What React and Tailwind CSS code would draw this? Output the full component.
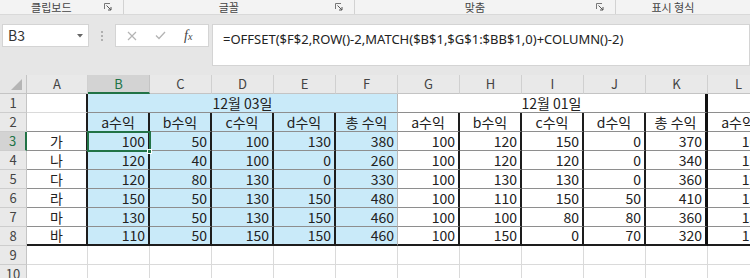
import React from "react";

const COLS = ["A", "B", "C", "D", "E", "F", "G", "H", "I", "J", "K", "L"];
const HEADS = ["a수익", "b수익", "c수익", "d수익", "총 수익"];
const ROWS = [
  ["가", 100, 50, 100, 130, 380, 100, 120, 150, 0, 370, 100],
  ["나", 120, 40, 100, 0, 260, 100, 120, 120, 0, 340, 120],
  ["다", 120, 80, 130, 0, 330, 100, 130, 130, 0, 360, 120],
  ["라", 150, 50, 130, 150, 480, 100, 110, 150, 50, 410, 150],
  ["마", 130, 50, 130, 150, 460, 100, 100, 80, 80, 360, 130],
  ["바", 110, 50, 150, 150, 460, 100, 150, 0, 70, 320, 110],
];

const font = "font-['Noto_Sans_CJK_KR','Noto_Sans',sans-serif]";

// right edge of a cell: black lines between the columns of each block
const rightBorder = (r, c) => {
  if (r > 8) return "border-r border-r-[#dadada]";
  if (c === 0) return "border-r-2 border-r-[#1d1d1d]";
  if (c === 5) return "border-r border-r-[#b8b8b8]";
  if (c === 10) return "border-r-[3px] border-r-[#111111]";
  if (r >= 2) return "border-r-2 border-r-[#1d1d1d]";
  return "border-r border-r-[#dadada]";
};

const bottomBorder = (r, c) => {
  if (r === 8) return "border-b-2 border-b-[#1d1d1d]";
  if (r < 8 && c >= 1) return "border-b border-b-[#8e8e8e]";
  if (c === 0 && r >= 2 && r < 8) return "border-b border-b-[#8e8e8e]";
  return "border-b border-b-[#dadada]";
};

const Cell = ({ r, c, blue, align = "right", span, children }) => (
  <div
    className={`h-[19px] flex items-center overflow-hidden whitespace-nowrap text-[14px] text-[#222] ${font} ${
      blue ? "bg-[#c9eaf9]" : "bg-white"
    } ${align === "right" ? "justify-end pr-[3px]" : "justify-center"} ${
      span ? "col-span-5" : ""
    } ${rightBorder(r, c)} ${bottomBorder(r, c)}`}
  >
    {children}
  </div>
);

const Launcher = () => (
  <svg width="8" height="8" viewBox="0 0 8 8" className="shrink-0">
    <path d="M0.5 6V0.5H6" fill="none" stroke="#777" strokeWidth="1" />
    <path d="M2.5 2.5L7 7M7 4V7H4" fill="none" stroke="#555" strokeWidth="1" />
  </svg>
);

const RibbonGroup = ({ label, width, launcher = true, last }) => (
  <div
    className={`flex items-center h-full ${width} ${last ? "" : "border-r border-r-[#d2d2d2]"}`}
  >
    <div className={`flex-1 text-center text-[11px] text-[#444] ${font}`}>{label}</div>
    <div className="w-[20px] flex justify-start pl-[1px]">{launcher && <Launcher />}</div>
  </div>
);

export default function App() {
  const sheetRows = [];
  for (let r = 1; r <= 10; r++) {
    const cells = [];
    const selected = r === 3;
    cells.push(
      <div
        key="h"
        className={`h-[19px] flex items-center justify-center text-[13px] ${font} border-b border-b-[#cdcdcd] ${
          selected
            ? "bg-[#d3d3d3] text-[#217346] border-r-2 border-r-[#217346]"
            : "bg-[#e9e9e9] text-[#444] border-r border-r-[#c4c4c4]"
        }`}
      >
        {r}
      </div>
    );
    if (r === 1) {
      cells.push(<Cell key="a" r={1} c={0} />);
      cells.push(
        <Cell key="b" r={1} c={5} blue align="center" span>
          12월 03일
        </Cell>
      );
      cells.push(
        <Cell key="g" r={1} c={10} align="center" span>
          12월 01일
        </Cell>
      );
      cells.push(<Cell key="l" r={1} c={11} />);
    } else if (r === 2) {
      COLS.forEach((col, c) => {
        const text = c === 0 ? "" : HEADS[(c - 1) % 5];
        cells.push(
          <Cell key={col} r={2} c={c} blue={c >= 1 && c <= 5} align="center">
            {text}
          </Cell>
        );
      });
    } else if (r <= 8) {
      ROWS[r - 3].forEach((v, c) => {
        cells.push(
          <Cell key={c} r={r} c={c} blue={c >= 1 && c <= 5} align={c === 0 ? "center" : "right"}>
            {v}
          </Cell>
        );
      });
    } else {
      COLS.forEach((col, c) => cells.push(<Cell key={col} r={r} c={c} />));
    }
    sheetRows.push(...cells);
  }

  return (
    <div className={`w-[750px] h-[278px] overflow-hidden bg-[#e6e6e6] ${font}`}>
      {/* ribbon group labels */}
      <div className="h-[15px] flex bg-[#f3f3f3] border-b border-b-[#d9d9d9]">
        <RibbonGroup label="클립보드" width="w-[127px]" />
        <RibbonGroup label="글꼴" width="w-[238px]" />
        <RibbonGroup label="맞춤" width="w-[268px]" />
        <RibbonGroup label="표시 형식" width="w-[138px]" launcher={false} last />
      </div>

      {/* formula bar */}
      <div className="h-[60px] flex items-start pt-[9px] pl-[2px]">
        <div className="w-[87px] h-[23px] bg-white border border-[#d4d4d4] flex items-center justify-between pl-[5px] pr-[5px]">
          <span className="text-[14px] text-[#333]">B3</span>
          <svg width="6" height="4" viewBox="0 0 6 4">
            <path d="M0 0H6L3 3.5Z" fill="#666" />
          </svg>
        </div>
        <div className="w-[26px] h-[23px] flex flex-col items-center justify-center gap-[2px]">
          <span className="w-[2px] h-[2px] bg-[#b0b0b0]" />
          <span className="w-[2px] h-[2px] bg-[#b0b0b0]" />
          <span className="w-[2px] h-[2px] bg-[#b0b0b0]" />
        </div>
        <div className="w-[94px] h-[23px] bg-white border border-[#d4d4d4] flex items-center pl-[11px] gap-[18px]">
          <svg width="10" height="10" viewBox="0 0 10 10">
            <path d="M1 1L9 9M9 1L1 9" stroke="#b4b4b4" strokeWidth="1.2" />
          </svg>
          <svg width="11" height="9" viewBox="0 0 11 9">
            <path d="M1 4.5L4 7.5L10 1" fill="none" stroke="#b4b4b4" strokeWidth="1.3" />
          </svg>
          <span className="font-['Liberation_Serif',serif] italic text-[14px] text-[#444] leading-none">
            f<span className="text-[10px]">x</span>
          </span>
        </div>
        <div className="ml-[3px] flex-1 h-[42px] bg-white border border-[#d4d4d4] pl-[10px]">
          <span className="font-['Noto_Sans',sans-serif] text-[13px] leading-[21px] text-[#222] whitespace-nowrap">
            =OFFSET($F$2,ROW()-2,MATCH($B$1,$G$1:$BB$1,0)+COLUMN()-2)
          </span>
        </div>
      </div>

      {/* sheet */}
      <div className="relative w-[770px]">
        <div className="grid grid-cols-[27px_61px_repeat(11,62px)]">
          <div className="h-[19px] bg-[#e6e6e6] border-r border-r-[#c4c4c4] border-b border-b-[#c4c4c4] flex items-end justify-end pr-[4px] pb-[3px]">
            <svg width="11" height="11" viewBox="0 0 11 11">
              <path d="M11 0V11H0Z" fill="#b5b5b5" />
            </svg>
          </div>
          {COLS.map((col) => (
            <div
              key={col}
              className={`h-[19px] flex items-center justify-center text-[13px] ${
                col === "B"
                  ? "bg-[#d3d3d3] text-[#217346] border-b-2 border-b-[#217346] border-r border-r-[#c4c4c4]"
                  : "bg-[#e9e9e9] text-[#444] border-b border-b-[#c4c4c4] border-r border-r-[#d0d0d0]"
              }`}
            >
              {col}
            </div>
          ))}
          {sheetRows}
        </div>
        {/* active cell B3 */}
        <div className="absolute left-[87px] top-[56px] w-[64px] h-[21px] border-2 border-[#217346] pointer-events-none" />
        <div className="absolute left-[147px] top-[74px] w-[5px] h-[5px] bg-[#217346] border border-white" />
      </div>
    </div>
  );
}
